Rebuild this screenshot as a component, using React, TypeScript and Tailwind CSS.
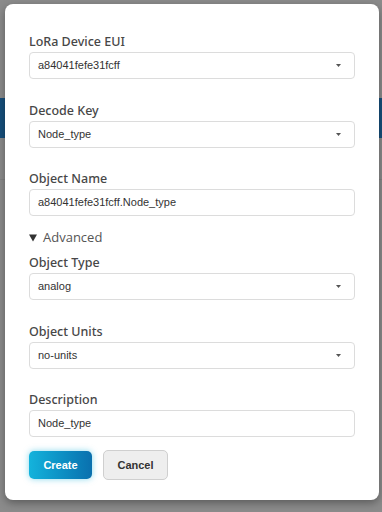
import { useState } from "react";

interface Field {
  label: string;
  value: string;
  select?: boolean;
}

function Caret() {
  return (
    <svg width="5" height="3" viewBox="0 0 5 3" className="shrink-0">
      <path d="M0 0 H5 L2.5 3 Z" fill="#555" />
    </svg>
  );
}

function FormField({ field, className }: { field: Field; className?: string }) {
  return (
    <div className={className}>
      <div className="h-5 text-[12.5px] leading-5 font-medium text-[#474747] font-['Noto_Sans',sans-serif]">
        {field.label}
      </div>
      <div className="flex h-[27px] items-center justify-between rounded-[4px] border border-[#dcdcdc] bg-white pl-[8px] pr-[13px] text-[11px] text-[#333] font-['Liberation_Sans',Arial,sans-serif]">
        <span>{field.value}</span>
        {field.select && <Caret />}
      </div>
    </div>
  );
}

export default function App() {
  const [open] = useState(true);

  return (
    <div className="relative h-[512px] w-[382px] overflow-hidden bg-[#8b8b8b]">
      <div className="h-[98px]" />
      <div className="h-[40px] bg-[#164f7c]" />
      <div className="mt-[41px] h-px bg-[#828282]" />

      <div className="absolute left-[5px] top-[4px] w-[374px] rounded-[8px] bg-white px-6 pt-[28px] pb-[20px] shadow-[0_3px_8px_rgba(0,0,0,0.35)]">
        <FormField field={{ label: "LoRa Device EUI", value: "a84041fefe31fcff", select: true }} />
        <FormField className="mt-[22px]" field={{ label: "Decode Key", value: "Node_type", select: true }} />
        <FormField className="mt-[21px]" field={{ label: "Object Name", value: "a84041fefe31fcff.Node_type" }} />

        <div className="mt-[12px] flex h-5 items-center gap-[6px] text-[13px] text-[#555] font-['Open_Sans',sans-serif]">
          <svg width="8" height="8" viewBox="0 0 8 8">
            <path d="M0 0.5 H8 L4 7.5 Z" fill="#333" />
          </svg>
          <span>Advanced</span>
        </div>

        {open && (
          <>
            <FormField className="mt-[5px]" field={{ label: "Object Type", value: "analog", select: true }} />
            <FormField className="mt-[22px]" field={{ label: "Object Units", value: "no-units", select: true }} />
            <FormField className="mt-[21px]" field={{ label: "Description", value: "Node_type" }} />
          </>
        )}

        <div className="mt-[14px] flex gap-[11px] font-['Liberation_Sans',Arial,sans-serif] text-[11px] font-bold">
          <button className="h-[28px] w-[63px] rounded-[5px] bg-gradient-to-r from-[#14b3dc] to-[#0a70ae] text-white shadow-[0_0_6px_rgba(20,180,220,0.5)]">
            Create
          </button>
          <button className="h-[30px] -mt-px w-[65px] rounded-[5px] border border-[#cfcfcf] bg-[#eeeeee] text-[#333]">
            Cancel
          </button>
        </div>
      </div>
    </div>
  );
}
